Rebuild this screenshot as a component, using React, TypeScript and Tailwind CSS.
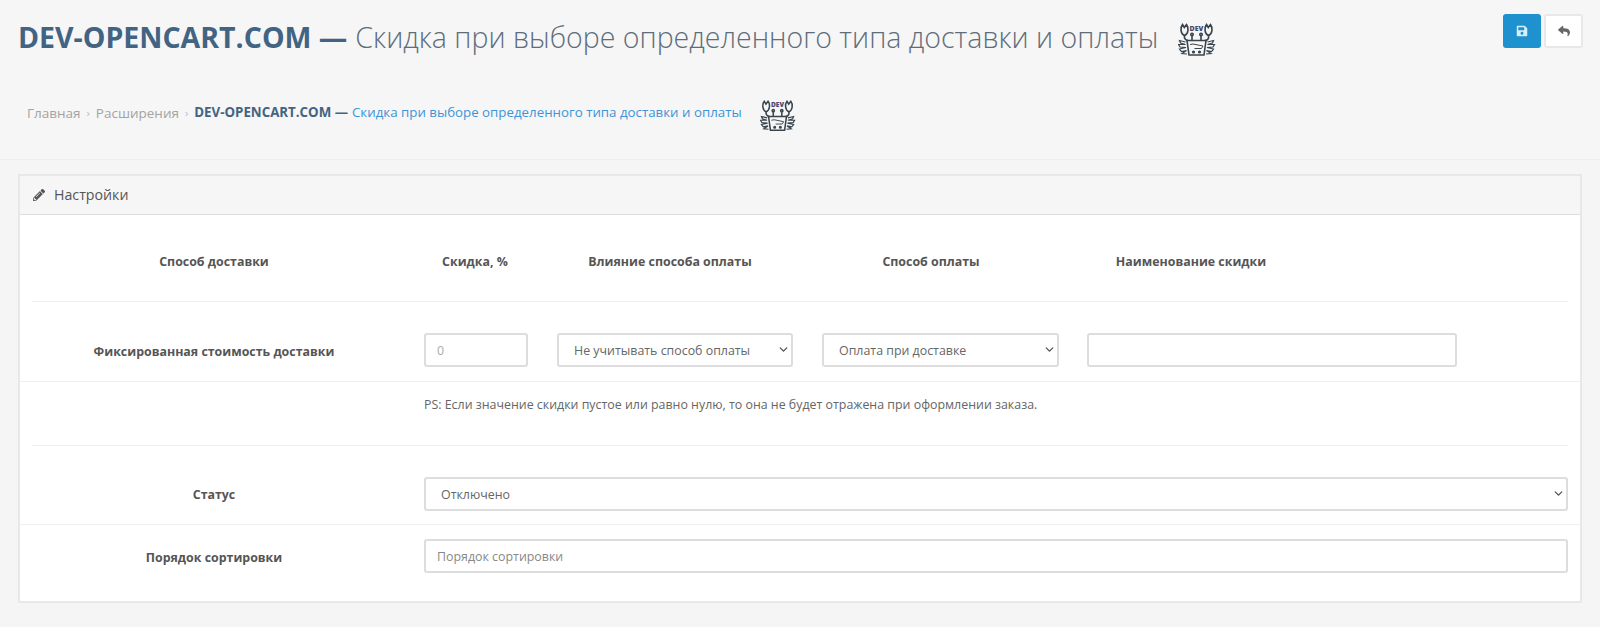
import { ChevronDown } from "lucide-react";
import { FaPencilAlt, FaReply, FaSave } from "react-icons/fa";

const CrabLogo = ({ width, height }: { width: number; height: number }) => {
  return (
    <svg width={width} height={height} viewBox="0 0 38 33" fill="none" stroke="#38444e" strokeWidth="1.6" className="shrink-0">
      <path d="M6.500 12.500C2.500 11 2 4.500 4.500 1.500L6.300 4.500L8.500 1.500C11 4.500 10.500 11 6.500 12.500z" />
      <path d="M30.500 12.500C26.500 11 26 4.500 28.500 1.500L30.300 4.500L32.500 1.500C35 4.500 34.500 11 30.500 12.500z" />
      <path d="M6.500 12.500C6 15.500 7 17 10 17.500M30.500 12.500C31 15.500 30 17 27 17.500" />
      <path d="M8 17.500H29M9 17.500L11 32H26L28 17.500" />
      <path d="M14 17V13M23 17V13" />
      <circle cx="14" cy="11.500" r="1.200" />
      <circle cx="23" cy="11.500" r="1.200" />
      <path d="M12 21.500L15 21L25 23L23.500 25.500H16.500" strokeWidth="1" />
      <circle cx="15.500" cy="29" r="0.800" fill="#38444e" />
      <circle cx="21.500" cy="29" r="0.800" fill="#38444e" />
      <path d="M7.500 19L1.500 17.500L2.500 20L7.500 21.500L0.500 21.500L2 24L8 24.500L1.500 26L3.500 28.500L8.500 27.500L4 30.500L9 31" strokeWidth="1.200" />
      <path d="M29.500 19L35.500 17.500L34.500 20L29.500 21.500L36.500 21.500L35 24L29 24.500L35.500 26L33.500 28.500L28.500 27.500L33 30.500L28 31" strokeWidth="1.200" />
      <text x="18.500" y="8" textAnchor="middle" fontSize="7" fontWeight="800" fill="#4a4a6a" stroke="none" fontFamily="'Open Sans', sans-serif">
        DEV
      </text>
    </svg>
  );
};

const SelectBox = ({ value, className }: { value: string; className: string }) => {
  return (
    <div className={`relative h-[34px] ${className}`}>
      <select className="h-full w-full appearance-none rounded-[3px] border-2 border-[#dddddd] bg-white pl-[15px] pt-[2px] text-[12.400px] text-[#666]">
        <option>{value}</option>
      </select>
      <ChevronDown strokeWidth={2.500} className="pointer-events-none absolute right-[3px] top-[10px] h-[13px] w-[13px] text-[#555]" />
    </div>
  );
};

const App = () => {
  return (
    <div className="min-h-[627px] bg-[#f5f5f5] font-['Open_Sans',sans-serif] text-[12.400px] text-[#666]">
      <div className="h-[160px] border-b border-[#eeeeee] bg-[#f6f6f6]">
        <div className="flex items-start justify-between pl-[18px] pr-[17px] pt-[14px]">
          <h1 className="mt-[1px] flex items-center text-[28.500px] leading-[44px] font-light text-[#5f6d7b]">
            <span className="font-bold text-[#426482]">DEV-OPENCART.COM —</span>
            <span className="ml-[8px]">Скидка при выборе определенного типа доставки и оплаты</span>
            <span className="ml-[20px] mt-[5px]">
              <CrabLogo width={38} height={33} />
            </span>
          </h1>
          <div className="flex gap-[3px]">
            <button className="flex h-[34px] w-[38px] items-center justify-center rounded-[3px] bg-[#1e91cf] text-[#d8f0fb]">
              <FaSave className="h-[12px] w-[12px]" />
            </button>
            <button className="flex h-[34px] w-[39px] items-center justify-center rounded-[3px] border-2 border-[#e8e8e8] bg-white text-[#666]">
              <FaReply className="h-[12px] w-[12px]" />
            </button>
          </div>
        </div>
        <div className="mt-[35px] flex items-center pl-[27px] text-[13.500px]">
          <span className="text-[#a3a3a3]">Главная</span>
          <span className="mx-[6px] text-[11px] text-[#bbb]">›</span>
          <span className="text-[#a3a3a3]">Расширения</span>
          <span className="mx-[6px] text-[11px] text-[#bbb]">›</span>
          <span className="text-[13.300px] font-bold text-[#426482]">DEV-OPENCART.COM —</span>
          <span className="ml-[4px] text-[13.300px] text-[#3d94d6]">Скидка при выборе определенного типа доставки и оплаты</span>
          <span className="ml-[18px] mt-[5px]">
            <CrabLogo width={36} height={33} />
          </span>
        </div>
      </div>

      <div className="mx-[18px] mt-[14px] mb-[24px] border-2 border-[#e8e8e8] bg-white">
        <div className="flex h-[39px] items-center gap-[9px] border-b border-[#dddddd] bg-[#f6f6f6] pl-[13px] text-[14.200px] text-[#555]">
          <FaPencilAlt className="h-[12px] w-[12px]" />
          <span>Настройки</span>
        </div>

        <div className="mx-[12px] flex h-[87px] items-center border-b border-[#eeeeee] pt-[9px] font-bold text-[#555]">
          <div className="w-[364px] text-center">Способ доставки</div>
          <div className="ml-[28px] w-[102px] text-center">Скидка, %</div>
          <div className="ml-[34px] w-[220px] text-center">Влияние способа оплаты</div>
          <div className="ml-[51px] w-[200px] text-center">Способ оплаты</div>
          <div className="ml-[60px] w-[200px] text-center">Наименование скидки</div>
        </div>

        <div className="flex h-[80px] items-start border-b border-[#eeeeee] pl-[12px] pt-[31px]">
          <div className="flex h-[34px] w-[364px] items-center justify-center pt-[4px] font-bold text-[#555]">Фиксированная стоимость доставки</div>
          <input
            placeholder="0"
            className="ml-[28px] h-[34px] w-[104px] rounded-[3px] border-2 border-[#dddddd] bg-white px-[11px] placeholder:text-[#aaa]"
          />
          <SelectBox value="Не учитывать способ оплаты" className="ml-[29px] w-[236px]" />
          <SelectBox value="Оплата при доставке" className="ml-[29px] w-[237px]" />
          <input className="ml-[28px] h-[34px] w-[370px] rounded-[3px] border-2 border-[#dddddd] bg-white" />
        </div>

        <div className="mx-[12px] h-[64px] border-b border-[#eeeeee] pl-[392px] pt-[14px] leading-[18px] text-[#666]">
          PS: Если значение скидки пустое или равно нулю, то она не будет отражена при оформлении заказа.
        </div>

        <div className="flex h-[79px] items-start border-b border-[#eeeeee] pl-[12px] pr-[12px] pt-[31px]">
          <div className="flex h-[34px] w-[364px] items-center justify-center pt-[2px] font-bold text-[#555]">Статус</div>
          <SelectBox value="Отключено" className="ml-[28px] flex-1" />
        </div>

        <div className="flex h-[76px] items-start pl-[12px] pr-[12px] pt-[14px]">
          <div className="flex h-[34px] w-[364px] items-center justify-center pt-[4px] font-bold text-[#555]">Порядок сортировки</div>
          <input
            placeholder="Порядок сортировки"
            className="ml-[28px] h-[34px] flex-1 rounded-[3px] border-2 border-[#dddddd] bg-white px-[11px] pt-[1px] placeholder:text-[#888]"
          />
        </div>
      </div>
    </div>
  );
};

export default App;
